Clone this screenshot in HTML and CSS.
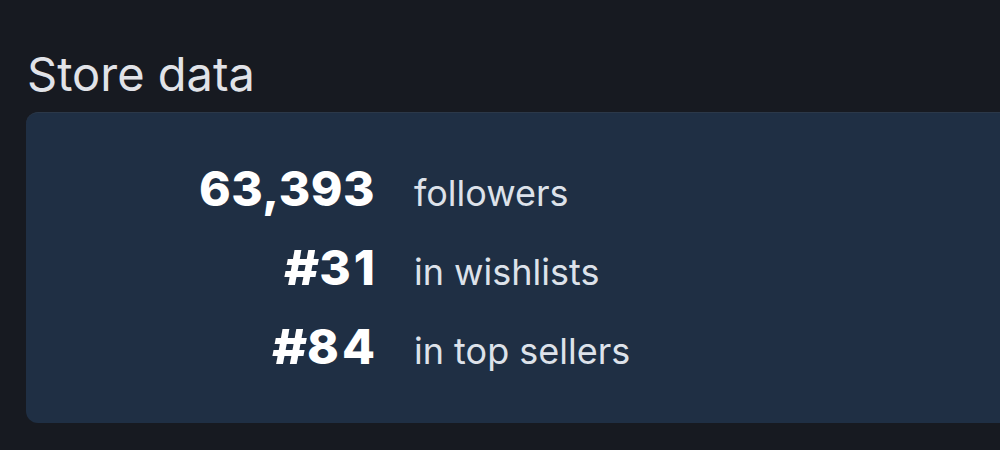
FILE: index.html
```html
<!DOCTYPE html>
<html>
<head>
<meta charset="utf-8">
<link rel="stylesheet" href="styles.css">
</head>
<body>
<section class="store">
  <h2 class="title">Store data</h2>
  <div class="card">
    <div class="stats">
      <span class="num">63,393</span><span class="label">followers</span>
      <span class="num rank"><span class="hash">#</span>31</span><span class="label">in wishlists</span>
      <span class="num rank"><span class="hash">#</span>84</span><span class="label">in top sellers</span>
    </div>
  </div>
</section>
</body>
</html>
```
FILE: styles.css
```css
html, body {
  margin: 0;
  background: #171a21;
  width: 1000px;
  height: 450px;
  overflow: hidden;
}
body {
  font-family: Inter, "Noto Sans", sans-serif;
}
.store {
  padding: 45px 0 0 26px;
}
.title {
  margin: 0 0 9px 1px;
  font-size: 47px;
  line-height: 58px;
  font-weight: 400;
  color: #e1e3e8;
}
.card {
  background: #1f2f44;
  border-top: 1px solid #2b3849;
  border-radius: 12px 0 0 12px;
  height: 311px;
  margin-right: -20px;
  box-sizing: border-box;
  padding-top: 47px;
}
.stats {
  display: grid;
  grid-template-columns: 349px auto;
  grid-auto-rows: 79px;
  column-gap: 39px;
  align-items: baseline;
}
.num {
  text-align: right;
  font-size: 48px;
  font-weight: 800;
  letter-spacing: 0.5px;
  color: #ffffff;
  line-height: 58px;
}
.rank {
  letter-spacing: 3px;
  margin-right: -3px;
}
.hash {
  display: inline-block;
  transform: scaleX(1.12);
  transform-origin: center;
  letter-spacing: 0;
  margin: 0 2px 0 3px;
}
.label {
  font-size: 36px;
  color: #dde2ea;
  line-height: 58px;
}
```
